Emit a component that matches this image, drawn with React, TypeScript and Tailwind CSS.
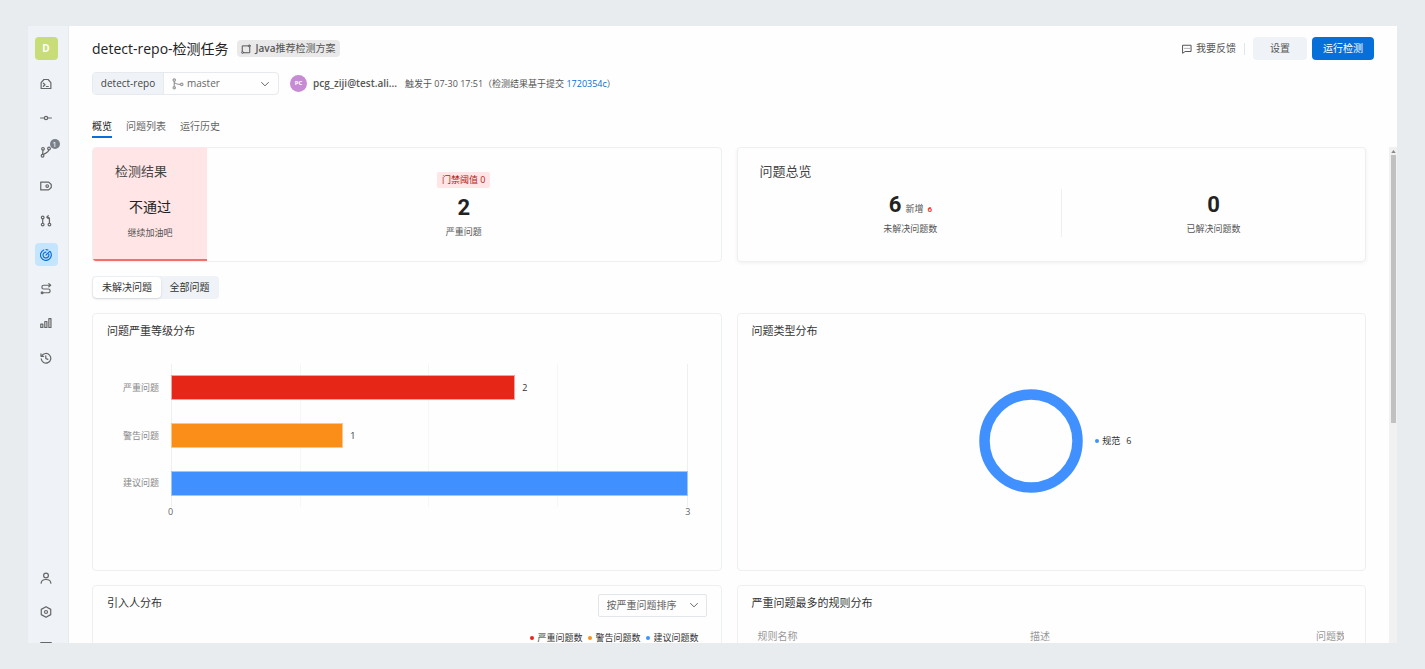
import type { ReactNode } from "react";
import clsx from "clsx";

type IconProps = { children: ReactNode; className?: string };

const Icon = ({ children, className = "size-3" }: IconProps) => (
  <svg
    viewBox="0 0 16 16"
    fill="none"
    stroke="currentColor"
    strokeWidth="1.6"
    strokeLinecap="round"
    strokeLinejoin="round"
    aria-hidden="true"
    className={clsx("shrink-0", className)}
  >
    {children}
  </svg>
);

const Chevron = () => (
  <Icon className="pointer-events-none absolute right-2 top-1.5 size-[10px] text-[#666]">
    <path d="M2.5 5.5 8 11l5.5-5.5" />
  </Icon>
);

const navItems = [
  {
    label: "代码空间",
    icon: (
      <>
        <path d="M1.5 14V6.2L5.2 2h5.6l3.7 4.2V14z" />
        <path d="m4.5 7 2.2 2-2.2 2M8.5 11.3H11" />
      </>
    ),
  },
  {
    label: "提交",
    icon: (
      <>
        <circle cx="8" cy="8" r="2.2" />
        <path d="M.8 8h4.8M10.4 8h4.8" />
      </>
    ),
  },
  {
    label: "分支",
    badge: 1,
    icon: (
      <>
        <circle cx="4" cy="3.8" r="1.8" />
        <circle cx="3.4" cy="13" r="1.8" />
        <circle cx="12" cy="3.4" r="1.8" />
        <path d="M3.9 5.6 3.5 11.2M11.8 5.2c-.3 3.4-3.6 3.9-7 5.9" />
      </>
    ),
  },
  {
    label: "标签",
    icon: (
      <>
        <path d="M1 2.8h10.6L15 6v4l-3.4 3.2H1z" />
        <circle cx="9.6" cy="8" r="1.7" />
      </>
    ),
  },
  {
    label: "合并请求",
    icon: (
      <>
        <circle cx="3.6" cy="3.4" r="1.8" />
        <circle cx="3.6" cy="12.8" r="1.8" />
        <circle cx="12.6" cy="12.8" r="1.8" />
        <path d="M3.6 5.2V11M12.6 11V4.6c0-1.2-.6-1.8-2.8-1.8M11 .8l-2 2 2 2" />
      </>
    ),
  },
  {
    label: "代码检测",
    active: true,
    icon: (
      <>
        <path d="M13.6 3.6A7.200 7.200 0 1 1 5 1.400" />
        <path d="M8 .8a7.200 7.200 0 0 1 2.600.500" />
        <path d="M11.600 6.600A3.900 3.900 0 1 1 8 4.100" />
        <path d="m8 8 5-4.800" />
      </>
    ),
  },
  {
    label: "流水线",
    icon: (
      <>
        <path d="M13 3H5a2.5 2.5 0 0 0 0 5h6a2.5 2.5 0 0 1 0 5H3.5" />
        <path d="m11.8.9 2.4 2.1-2.4 2.1" />
        <circle cx="2.8" cy="13" r="1.2" />
      </>
    ),
  },
  {
    label: "统计",
    icon: (
      <>
        <rect x="1" y="9.5" width="2.8" height="4.5" />
        <rect x="6.4" y="6" width="2.8" height="8" />
        <rect x="11.8" y="2.2" width="2.8" height="11.8" />
      </>
    ),
  },
  {
    label: "历史",
    icon: (
      <>
        <path d="M2.4 5.2A6.4 6.4 0 1 1 1.6 9" />
        <path d="M1.3 2.3v3.4h3.5M7.7 5v3.6l2.8 1.2" />
      </>
    ),
  },
];

const footerItems = [
  {
    label: "成员",
    icon: (
      <>
        <circle cx="8" cy="4.6" r="3.2" />
        <path d="M1.5 15c.2-3.2 2.5-5 6.5-5s6.3 1.8 6.5 5" />
      </>
    ),
  },
  {
    label: "设置",
    icon: (
      <>
        <path d="m8 .9 6.3 3.600v7L8 15.100l-6.300-3.600v-7z" />
        <circle cx="8" cy="8" r="2" />
      </>
    ),
  },
  { label: "菜单", icon: <path d="M1 3.5h14M1 8h14M1 12.5h14" /> },
];

const severities = [
  { name: "严重问题", value: 2, bar: "bg-[#e62617] border-[#f3a19a]" },
  { name: "警告问题", value: 1, bar: "bg-[#fa8e18] border-[#fcc58a]" },
  { name: "建议问题", value: 3, bar: "bg-[#4091ff] border-[#9cc6ff]" },
];
const maxSeverity = 3;

const introducerLegend = [
  { name: "严重问题数", dot: "bg-[#e62617]" },
  { name: "警告问题数", dot: "bg-[#fa8e18]" },
  { name: "建议问题数", dot: "bg-[#4091ff]" },
];

const NavButton = ({ item }: { item: (typeof navItems)[number] | (typeof footerItems)[number] }) => (
  <button
    type="button"
    aria-label={item.label}
    className={clsx(
      "relative flex size-[23px] shrink-0 items-center justify-center rounded-sm",
      "active" in item && item.active ? "bg-[#c5e5ff] text-[#0b6fd8]" : "text-[#666]",
    )}
  >
    <Icon>{item.icon}</Icon>
    {"badge" in item && item.badge && (
      <span className="absolute -right-[2px] -top-[2px] flex size-[10px] items-center justify-center rounded-full bg-[#7a808a] text-[8px] text-white">
        {item.badge}
      </span>
    )}
  </button>
);

const Sidebar = () => (
  <aside className="flex w-[41px] shrink-0 flex-col items-center border-r border-[#e6eaee] bg-[#eff3f7] pr-1 pt-[11px]">
    <span className="flex size-[23px] shrink-0 items-center justify-center rounded-sm bg-[#c8dc78] text-[10px] font-bold text-white">
      D
    </span>
    <nav className="mt-3 flex h-[297px] shrink-0 flex-col justify-between">
      {navItems.map((item) => (
        <NavButton key={item.label} item={item} />
      ))}
    </nav>
    {/* The last entry runs past the bottom of the window */}
    <div className="-mb-[14px] mt-auto flex flex-col gap-[11px]">
      {footerItems.map((item) => (
        <NavButton key={item.label} item={item} />
      ))}
    </div>
  </aside>
);

const Header = () => (
  <header className="shrink-0 px-[23px] pt-[11px]">
    <div className="flex h-[23px] items-center">
      <h1 className="text-[14px] leading-5 text-[#222]">detect-repo-检测任务</h1>
      <span className="ml-2 flex h-[17px] items-center gap-[5px] rounded-sm bg-[#e9e9e9] px-1 text-[10px] font-semibold text-[#555]">
        <Icon className="size-[10px]">
          <path d="M2 11.500V3h9M14 5v9H4.500" />
          <circle cx="13.200" cy="3" r="1.500" />
          <circle cx="2.500" cy="13.500" r="1.500" />
        </Icon>
        <span>
          Java<span className="font-normal">推荐检测方案</span>
        </span>
      </span>
      <button type="button" className="ml-auto flex items-center gap-1 text-[10px] text-[#555]">
        <Icon className="size-[10px]">
          <path d="M1.5 2h13v10H5l-3.500 2.500z" />
          <path d="M4.800 7h.1M8 7h.1M11.200 7h.1" />
        </Icon>
        我要反馈
      </button>
      <span className="mx-2 h-3 w-px bg-[#e3e6e9]" />
      <button type="button" className="h-[23px] w-[54px] rounded-sm bg-[#eff3f7] text-[10px] text-[#555]">
        设置
      </button>
      <button
        type="button"
        className="ml-[5px] h-[23px] w-[62px] rounded-sm bg-[#066fda] text-[10px] text-white"
      >
        运行检测
      </button>
    </div>

    <div className="mt-3 flex h-[23px] items-center">
      <div className="flex h-full w-[187px] overflow-hidden rounded-sm border border-[#e6eaee]">
        <label
          htmlFor="branch"
          className="flex w-[71px] items-center justify-center border-r border-[#e6eaee] bg-[#eff3f7] text-[10px] text-[#444]"
        >
          detect-repo
        </label>
        <div className="relative flex-1 text-[#999]">
          <Icon className="pointer-events-none absolute left-2 top-[5px] size-3">
            <circle cx="3" cy="2.800" r="1.600" />
            <circle cx="3" cy="13" r="1.600" />
            <circle cx="13" cy="8.500" r="1.600" />
            <path d="M3 4.400v7M3 5c.5 2.500 3 3.500 8.400 3.500" />
          </Icon>
          <select
            id="branch"
            className="block h-full w-full appearance-none bg-transparent pl-[23px] text-[10px] text-[#666] outline-none"
          >
            <option>master</option>
          </select>
          <Chevron />
        </div>
      </div>
      <span className="ml-[11px] flex size-[17px] items-center justify-center rounded-full bg-[#c68bd3] text-[6px] font-bold text-white">
        PC
      </span>
      <span className="ml-1.5 text-[10px] font-semibold text-[#555]">pcg_ziji@test.ali...</span>
      <p className="ml-2 text-[9px] text-[#555]">
        触发于 07-30 17:51（检测结果基于提交{" "}
        <a href="#commit" className="text-[#066fda]">
          1720354c
        </a>
        ）
      </p>
    </div>

    <nav className="mt-[23px] flex h-[20px] gap-[14px] text-[10px] leading-4 text-[#666]">
      <a href="#overview" className="border-b-2 border-[#066fda] text-[#222]">
        概览
      </a>
      <a href="#issues">问题列表</a>
      <a href="#history">运行历史</a>
    </nav>
  </header>
);

const Card = ({ children, className }: { children: ReactNode; className?: string }) => (
  <section className={clsx("rounded-sm border border-[#eeeff1] bg-[#fefefe]", className)}>{children}</section>
);

const CardTitle = ({ children }: { children: ReactNode }) => (
  <h2 className="text-[11px] leading-4 text-[#333]">{children}</h2>
);

const ResultCard = () => (
  <Card className="flex h-[115px] overflow-hidden">
    <div className="w-[114px] border-b-2 border-[#f0706a] bg-[#ffe5e5] pt-[13px] text-center">
      <h2 className="pl-[22px] text-left text-[13px] leading-5 text-[#444]">检测结果</h2>
      <p className="mt-4 text-[14px] leading-5 text-[#222]">不通过</p>
      <p className="mt-2 text-[9px] leading-4 text-[#555]">继续加油吧</p>
    </div>
    <div className="flex flex-1 flex-col items-center pt-6">
      <span className="rounded-xs bg-[#ffe5e5] px-[5px] text-[9px] leading-4 text-[#b0201a]">门禁阈值 0</span>
      <strong className="mt-2 font-[Roboto] text-[22px] leading-6 text-[#222]">2</strong>
      <span className="mt-1 text-[9px] leading-4 text-[#555]">严重问题</span>
    </div>
  </Card>
);

const SummaryCard = () => (
  <Card className="h-[115px] pl-[22px] pt-[13px] shadow-[0_1px_4px_rgba(0,0,0,0.06)]">
    <h2 className="text-[13px] leading-5 text-[#444]">问题总览</h2>
    <div className="mt-2 grid h-12 grid-cols-2 text-center">
      <div className="border-r border-[#eeeff1] pt-1">
        <p className="flex h-6 items-baseline justify-center gap-1 text-[9px] leading-6 text-[#555]">
          <strong className="font-[Roboto] text-[22px] text-[#222]">6</strong>
          新增
          <b className="font-[Roboto] text-[8px] text-[#e33]">6</b>
        </p>
        <p className="mt-1 text-[9px] leading-4 text-[#555]">未解决问题数</p>
      </div>
      <div className="pt-1">
        <strong className="block font-[Roboto] text-[22px] leading-6 text-[#222]">0</strong>
        <p className="mt-1 text-[9px] leading-4 text-[#555]">已解决问题数</p>
      </div>
    </div>
  </Card>
);

const SeverityCard = () => (
  <Card className="h-[258px] px-[14px] pt-[9px]">
    <CardTitle>问题严重等级分布</CardTitle>
    <div className="mt-[25px] flex h-[143px] pr-[19px]">
      <div className="grid w-[64px] shrink-0 grid-rows-3 items-center pr-3 text-right text-[9px] text-[#888]">
        {severities.map((s) => (
          <span key={s.name}>{s.name}</span>
        ))}
      </div>
      <div className="relative flex-1">
        <div className="absolute inset-0 grid grid-cols-4 divide-x divide-[#f6f6f7] border-x border-[#f0f0f0]">
          <i />
          <i />
          <i />
          <i />
        </div>
        <div className="relative grid h-full grid-rows-3 items-center text-[9px] text-[#333]">
          {severities.map((s) => (
            <div key={s.name} className="flex items-center">
              <div
                className={clsx("h-[25px] shrink-0 border", s.bar)}
                style={{ width: `${(s.value / maxSeverity) * 100}%` }}
              />
              {s.value < maxSeverity && <span className="ml-[7px]">{s.value}</span>}
            </div>
          ))}
        </div>
      </div>
    </div>
    <div className="flex justify-between pl-[61px] pr-4 text-[9px] leading-[10px] text-[#666]">
      <span>0</span>
      <span>{maxSeverity}</span>
    </div>
  </Card>
);

const TypeCard = () => (
  <Card className="h-[258px] px-[14px] pt-[9px]">
    <CardTitle>问题类型分布</CardTitle>
    <div className="mt-[50px] flex items-center justify-center pl-2">
      <svg viewBox="0 0 104 104" className="size-[104px]" role="img" aria-label="规范 6">
        <circle cx="52" cy="52" r="46.5" fill="none" stroke="#4091ff" strokeWidth="10.5" />
      </svg>
      <p className="ml-3 flex items-center text-[9px] text-[#333]">
        <i className="mr-[3px] size-1 rounded-full bg-[#4091ff]" />
        规范 <span className="ml-1.5">6</span>
      </p>
    </div>
  </Card>
);

const IntroducerCard = () => (
  <Card className="h-[258px] px-[14px] pt-2">
    <div className="flex justify-between">
      <div className="pt-px">
        <CardTitle>引入人分布</CardTitle>
      </div>
      <div className="relative h-[23px] w-[109px]">
        <select
          aria-label="排序方式"
          className="block h-full w-full appearance-none rounded-xs border border-[#e3e6e9] bg-[#fefefe] pl-2 text-[10px] text-[#666] outline-none"
        >
          <option>按严重问题排序</option>
        </select>
        <Chevron />
      </div>
    </div>
    <ul className="mt-4 flex justify-end gap-1.5 pr-2 text-[9px] leading-[10px] text-[#333]">
      {introducerLegend.map((l) => (
        <li key={l.name} className="flex items-center gap-[3px]">
          <i className={clsx("size-1 rounded-full", l.dot)} />
          {l.name}
        </li>
      ))}
    </ul>
  </Card>
);

const RuleCard = () => (
  <Card className="h-[258px] pl-[14px] pr-[21px] pt-[9px]">
    <CardTitle>严重问题最多的规则分布</CardTitle>
    <table className="mt-[18px] w-full table-fixed text-left text-[10px] leading-[14px] text-[#999]">
      <thead>
        <tr>
          <th className="w-[47%] pl-1.5 font-normal">规则名称</th>
          <th className="font-normal">描述</th>
          <th className="w-[28px] overflow-hidden whitespace-nowrap font-normal">问题数</th>
        </tr>
      </thead>
    </table>
  </Card>
);

const Scrollbar = () => (
  <div aria-hidden="true" className="flex w-2 shrink-0 flex-col items-center bg-[#f1f1f1]">
    <span className="flex h-2 items-center">
      <svg viewBox="0 0 6 4" className="h-[3px] w-[5px]">
        <path d="M3 0 6 4H0z" fill="#8a8a8a" />
      </svg>
    </span>
    <span className="h-[54%] w-[5px] bg-[#c1c1c1]" />
  </div>
);

const App = () => {
  return (
    <div className="h-screen overflow-hidden bg-[#e8ecef] px-7 py-[26px] font-['Open_Sans','Noto_Sans_CJK_SC',sans-serif]">
      <div className="flex h-full overflow-hidden bg-[#fefefe]">
        <Sidebar />
        <div className="flex min-w-0 flex-1 flex-col">
          <Header />
          <div className="mt-[9px] flex min-h-0 flex-1">
            <main className="min-w-0 flex-1 overflow-hidden px-[23px]">
              <div className="grid grid-cols-2 gap-x-[15px]">
                <ResultCard />
                <SummaryCard />
              </div>
              <div className="my-[14px] flex h-[23px] w-fit rounded-sm bg-[#eff3f7] p-px text-[10px] text-[#333]">
                <button type="button" className="w-[68px] rounded-sm bg-white shadow-sm">
                  未解决问题
                </button>
                <button type="button" className="w-[57px]">
                  全部问题
                </button>
              </div>
              <div className="grid grid-cols-2 gap-x-[15px] gap-y-[14px]">
                <SeverityCard />
                <TypeCard />
                <IntroducerCard />
                <RuleCard />
              </div>
            </main>
            <Scrollbar />
          </div>
        </div>
      </div>
    </div>
  );
};

export default App;
